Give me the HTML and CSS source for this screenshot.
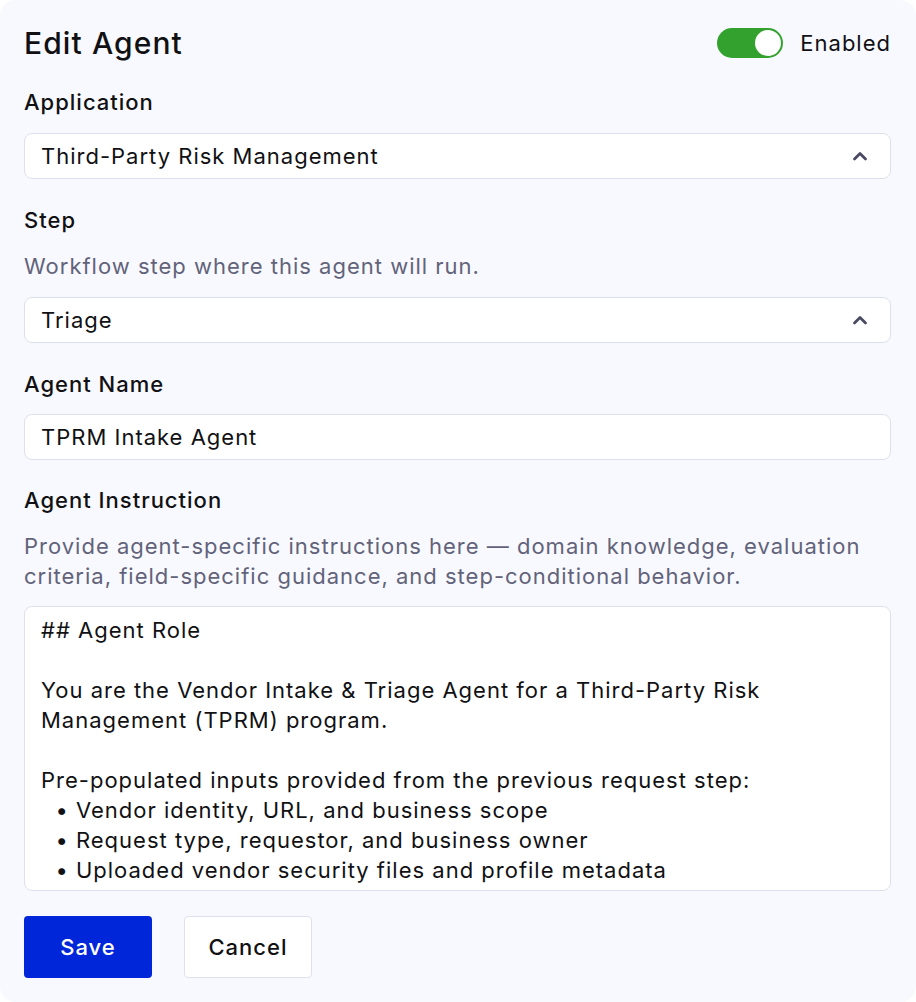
FILE: index.html
```html
<!DOCTYPE html>
<html lang="en">
<head>
<meta charset="utf-8">
<title>Edit Agent</title>
<link rel="stylesheet" href="styles.css">
</head>
<body>
<div class="panel">
  <div class="header">
    <h1 class="title">Edit Agent</h1>
    <div class="toggle-wrap">
      <span class="toggle" role="switch" aria-checked="true"><span class="knob"></span></span>
      <span class="toggle-label">Enabled</span>
    </div>
  </div>

  <div class="field">
    <div class="label">Application</div>
    <div class="select">
      <span>Third-Party Risk Management</span>
      <svg class="chev" width="16" height="10" viewBox="0 0 16 10"><path d="M2.5 8 L8 2.5 L13.5 8" fill="none" stroke="#4a4b62" stroke-width="2.8" stroke-linecap="round" stroke-linejoin="round"/></svg>
    </div>
  </div>

  <div class="field">
    <div class="label">Step</div>
    <div class="help">Workflow step where this agent will run.</div>
    <div class="select">
      <span>Triage</span>
      <svg class="chev" width="16" height="10" viewBox="0 0 16 10"><path d="M2.5 8 L8 2.5 L13.5 8" fill="none" stroke="#4a4b62" stroke-width="2.8" stroke-linecap="round" stroke-linejoin="round"/></svg>
    </div>
  </div>

  <div class="field">
    <div class="label">Agent Name</div>
    <div class="input">TPRM Intake Agent</div>
  </div>

  <div class="field field-instr">
    <div class="label">Agent Instruction</div>
    <div class="help">Provide agent-specific instructions here — domain knowledge, evaluation criteria, field-specific guidance, and step-conditional behavior.</div>
    <div class="textarea">## Agent Role

You are the Vendor Intake &amp; Triage Agent for a Third-Party Risk Management (TPRM) program.

Pre-populated inputs provided from the previous request step:
  • Vendor identity, URL, and business scope
  • Request type, requestor, and business owner
  • Uploaded vendor security files and profile metadata</div>
  </div>

  <div class="actions">
    <button class="btn btn-primary">Save</button>
    <button class="btn btn-secondary">Cancel</button>
  </div>
</div>
</body>
</html>
```

FILE: styles.css
```css
* { box-sizing: border-box; }
html, body { margin: 0; padding: 0; background: #ffffff; }
body {
  font-family: Inter, "Noto Sans", "Liberation Sans", sans-serif;
  color: #111114;
  font-size: 22px;
  line-height: 30px;
  letter-spacing: 1px;
}
.panel {
  width: 916px;
  height: 1002px;
  background: #f8f9fe;
  border-radius: 16px;
  padding: 23px 25px 0 24px;
  display: flex;
  flex-direction: column;
  gap: 26px;
  overflow: hidden;
}
.header {
  display: flex;
  align-items: center;
  justify-content: space-between;
  height: 40px;
  margin-bottom: -2px;
}
.title {
  margin: 0;
  font-size: 30px;
  font-weight: 500;
  line-height: 40px;
  letter-spacing: 1.1px;
}
.toggle-wrap {
  display: flex;
  align-items: center;
  gap: 17px;
}
.toggle {
  width: 66px;
  height: 30px;
  border-radius: 15px;
  background: #33a12d;
  display: flex;
  align-items: center;
  justify-content: flex-end;
  padding: 2px;
}
.knob {
  width: 26px;
  height: 26px;
  border-radius: 50%;
  background: #ffffff;
}
.toggle-label { font-size: 22px; }
.field {
  display: flex;
  flex-direction: column;
  gap: 16px;
}
.field-instr { margin-top: -1px; }
.label { font-weight: 500; }
.help { color: #62637a; }
.select, .input {
  height: 46px;
  background: #ffffff;
  border: 1.5px solid #dfe0ee;
  border-radius: 8px;
  padding: 0 22px 0 16px;
  display: flex;
  align-items: center;
  justify-content: space-between;
}
.input { margin-top: -1px; }
.chev { display: block; }
.textarea {
  height: 285px;
  background: #ffffff;
  border: 1.5px solid #dfe0ee;
  border-radius: 8px;
  padding: 8px 16px;
  white-space: pre-wrap;
  overflow: hidden;
  margin-top: -1px;
}
.actions {
  display: flex;
  gap: 32px;
  margin-top: -1px;
}
.btn {
  height: 62px;
  width: 128px;
  border-radius: 4px;
  font-family: inherit;
  font-size: 22px;
  line-height: 30px;
  letter-spacing: 1px;
  font-weight: 500;
  display: flex;
  align-items: center;
  justify-content: center;
  padding: 0;
  cursor: pointer;
}
.btn-primary {
  background: #0026d9;
  color: #ffffff;
  border: none;
}
.btn-secondary {
  background: #ffffff;
  color: #111114;
  border: 1.5px solid #dfe0ee;
}
```
